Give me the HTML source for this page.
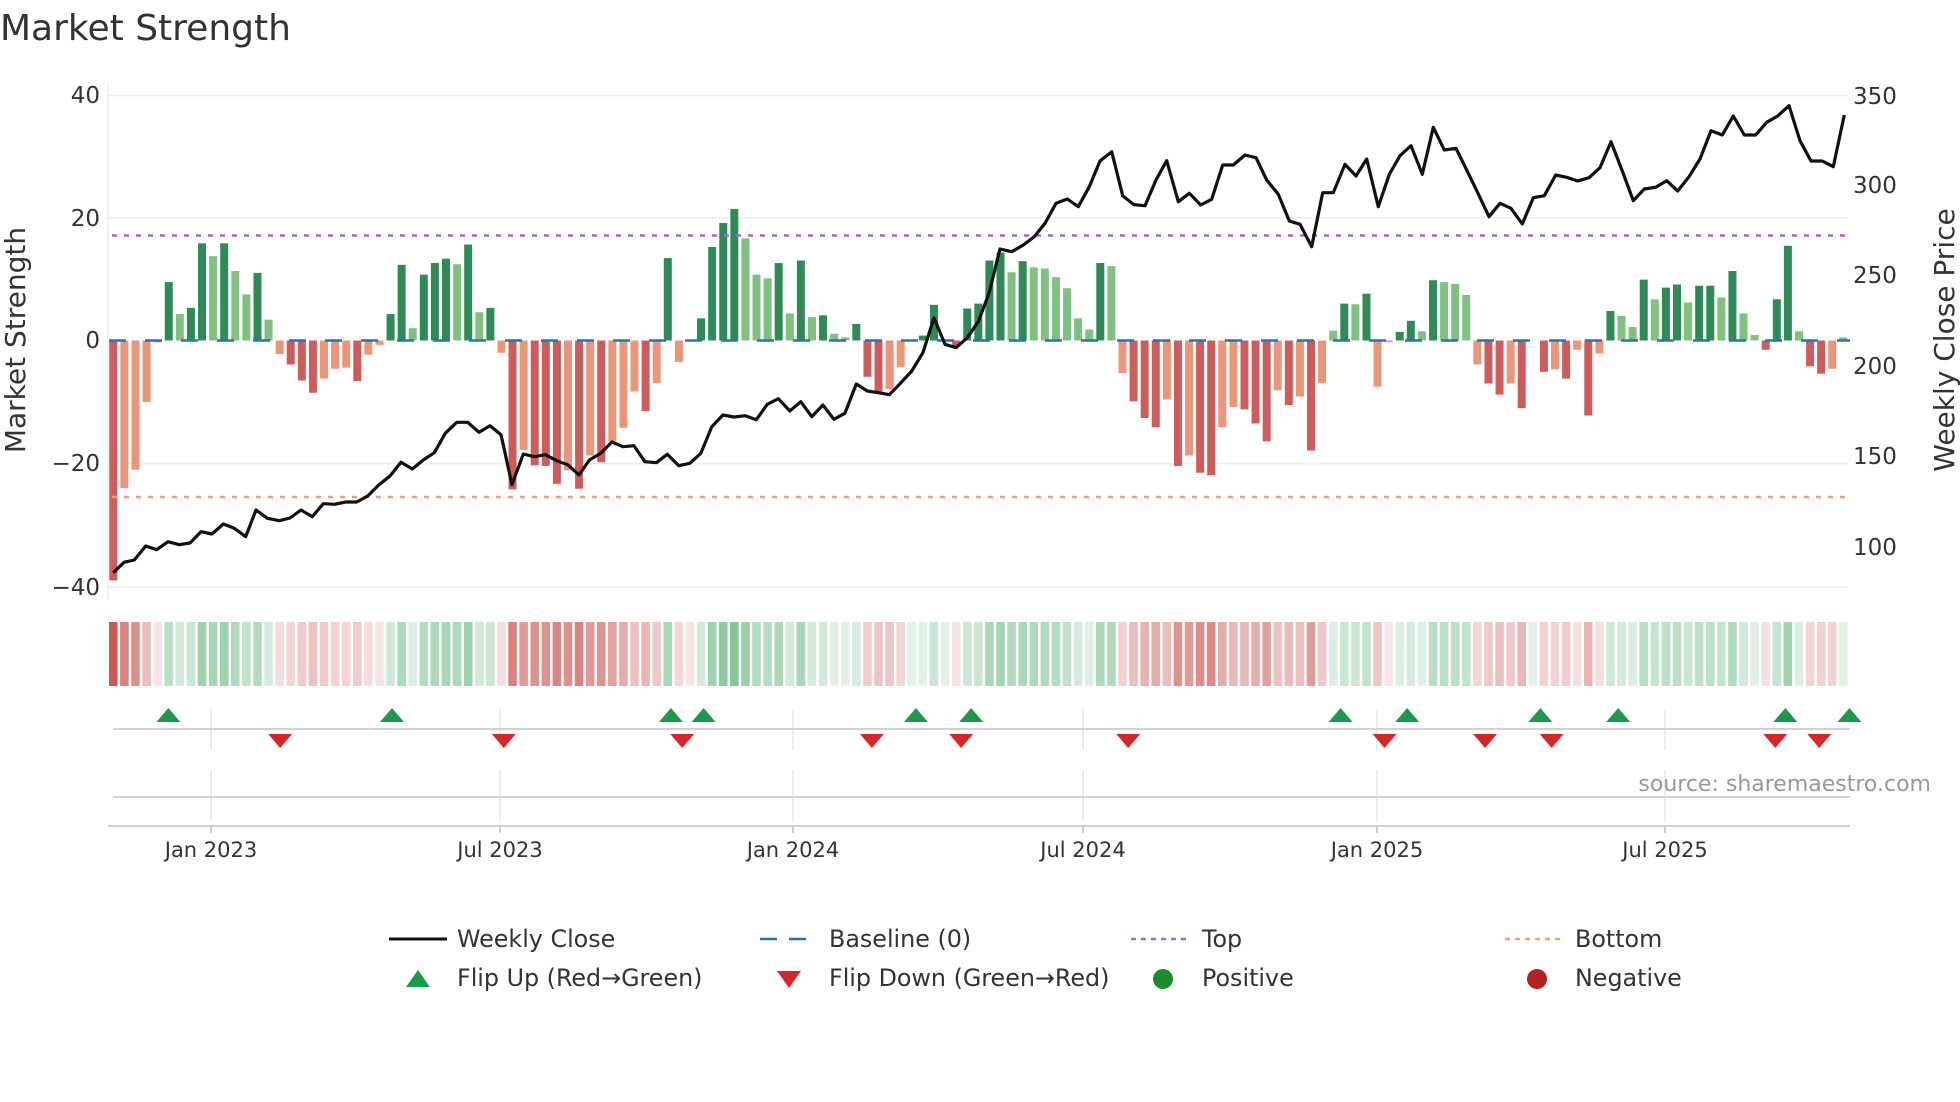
<!DOCTYPE html>
<html><head><meta charset="utf-8"><style>
html,body{margin:0;padding:0;background:#fff;}
svg{display:block;font-family:"DejaVu Sans","Liberation Sans",sans-serif;}
</style></head><body>
<svg id="s" width="1960" height="1102" viewBox="0 0 1960 1102" xmlns="http://www.w3.org/2000/svg">
<rect width="1960" height="1102" fill="#fff"/>
<text x="0" y="40" font-size="36" fill="#333">Market Strength</text>
<g stroke="#ececf2" stroke-width="1.5">
<line x1="108" y1="95.5" x2="1848" y2="95.5"/>
<line x1="108" y1="218" x2="1848" y2="218"/>
<line x1="108" y1="463.6" x2="1848" y2="463.6"/>
<line x1="108" y1="587" x2="1848" y2="587"/>
<line x1="108" y1="83" x2="108" y2="600"/>
</g>
<g font-size="23" fill="#333" text-anchor="end">
<text x="100" y="103">40</text><text x="100" y="226">20</text><text x="100" y="348">0</text>
<text x="100" y="471">−20</text><text x="100" y="595">−40</text>
</g>
<g font-size="23" fill="#333">
<text x="1853" y="104">350</text><text x="1853" y="193">300</text><text x="1853" y="283">250</text>
<text x="1853" y="374">200</text><text x="1853" y="464">150</text><text x="1853" y="555">100</text>
</g>
<text transform="translate(25,340) rotate(-90)" font-size="28" fill="#333" text-anchor="middle">Market Strength</text>
<text transform="translate(1954,340) rotate(-90)" font-size="28" fill="#333" text-anchor="middle">Weekly Close Price</text>
<g id="bars"></g>
<line x1="109" y1="340.5" x2="1850" y2="340.5" stroke="#1f77b4" stroke-width="2.5" stroke-dasharray="17 19"/>
<line x1="112" y1="235.5" x2="1850" y2="235.5" stroke="#a066dd" stroke-width="2.5" stroke-dasharray="5 7"/>
<line x1="112" y1="497" x2="1850" y2="497" stroke="#f0a070" stroke-width="2.5" stroke-dasharray="5 7"/>
<polyline id="price" fill="none" stroke="#111" stroke-width="3.2" stroke-linejoin="round"/>
<g id="strip"></g>
<g stroke="#e6e6ea" stroke-width="1.5" id="vgrid"></g>
<line x1="113" y1="729" x2="1850" y2="729" stroke="#d2d2d6" stroke-width="2"/>
<line x1="113" y1="797" x2="1850" y2="797" stroke="#d2d2d6" stroke-width="2"/>
<line x1="108" y1="826" x2="1850" y2="826" stroke="#cfcfd3" stroke-width="2"/>
<g id="marks"></g>
<g font-size="21" fill="#333" text-anchor="middle" id="ticks"></g>
<text x="1931" y="791" font-size="22" fill="#999" text-anchor="end">source: sharemaestro.com</text>
<g font-size="23.8" fill="#333">
<line x1="389" y1="939" x2="447" y2="939" stroke="#111" stroke-width="3"/>
<text x="457" y="947">Weekly Close</text>
<line x1="760" y1="939" x2="816" y2="939" stroke="#1f77b4" stroke-width="2.5" stroke-dasharray="17 12"/>
<text x="829" y="947">Baseline (0)</text>
<line x1="1131" y1="939" x2="1187" y2="939" stroke="#a066dd" stroke-width="2.5" stroke-dasharray="5 5"/>
<text x="1202" y="947">Top</text>
<line x1="1505" y1="939" x2="1562" y2="939" stroke="#f0a070" stroke-width="2.5" stroke-dasharray="5 5"/>
<text x="1575" y="947">Bottom</text>
<polygon points="406,987 430,987 418,970" fill="#1a9a4a"/>
<text x="457" y="986">Flip Up (Red→Green)</text>
<polygon points="777,971 801,971 789,988" fill="#d62728"/>
<text x="829" y="986">Flip Down (Green→Red)</text>
<circle cx="1163" cy="979" r="10" fill="#1e8c2e"/>
<text x="1202" y="986">Positive</text>
<circle cx="1537" cy="979" r="10" fill="#b22222"/>
<text x="1575" y="986">Negative</text>
</g>
</svg>
<script>
var NS="http://www.w3.org/2000/svg";
function el(t,a,p){var e=document.createElementNS(NS,t);for(var k in a)e.setAttribute(k,a[k]);document.getElementById(p).appendChild(e);return e;}
var V=[-39,-24,-21,-10,-0.3,9.5,4.3,5.3,15.8,13.7,15.8,11.3,7.5,11,3.4,-2.2,-3.9,-6.5,-8.5,-6.2,-4.6,-4.4,-6.6,-2.3,-0.7,4.3,12.3,2,10.7,12.6,13.3,12.4,15.6,4.6,5.3,
-2,-24.2,-17.8,-20.3,-20.4,-23.3,-21.1,-24.1,-18.7,-19.8,-16.4,-14.2,-8.3,-11.5,-6.9,13.4,-3.5,-0.2,3.6,15.2,19.1,21.4,16.6,10.7,10.1,12.6,4.4,13,3.8,4.1,1.1,0.5,2.7,
-5.9,-8.3,-7.9,-4.3,0,0.8,5.8,0,-1,5.2,6,13,14.3,11.1,12.9,11.9,11.7,10.3,8.5,3.6,1.8,12.6,12.1,
-5.3,-9.9,-12.6,-14.1,-9.6,-20.4,-18.7,-21.5,-21.9,-14.1,-10.8,-11.2,-13.5,-16.4,-8.1,-10.5,-9.1,-17.9,-6.9,
1.6,6,5.9,7.6,-7.5,-0.3,1.4,3.2,1.5,9.8,9.5,9.2,7.4,-3.9,-7,-8.8,-7,-11,0,-5.1,-4.7,-6.2,-1.5,-12.2,-2.1,
4.8,4.0,2.2,9.9,6.7,8.6,9.1,6.2,8.9,8.9,7,11.3,4.4,0.9,-1.5,6.7,15.4,1.5,-4.2,-5.4,-4.6,0.5];
var Z=340.5,K=6.15,X0=113.3,SP=11.09;
for(var i=0;i<V.length;i++){
 var v=V[i],x=X0+i*SP;
 var dark;
 if(i===0)dark=true;else dark=Math.abs(v)>=Math.abs(V[i-1])-0.05;
 var col=v>=0?(dark?"#2e8b57":"#80c080"):(dark?"#cd5c5c":"#e9967a");
 var h=Math.abs(v)*K; if(h<1.2&&v!==0)h=1.2;
 if(v!==0)el("rect",{x:x-4,y:v>=0?Z-h:Z,width:8,height:h,fill:col},"bars");
 var a=Math.min(0.92,0.14+0.78*Math.min(Math.abs(v)/34,1));
 var sc=v>=0?"rgba(60,165,90,"+a+")":"rgba(200,75,70,"+a+")";
 el("rect",{x:x-4.3,y:622,width:8.6,height:64,fill:sc},"strip");
}
var P=[];
function add(z,ox,oy,sx,sy){for(var i=0;i<z.length;i+=2)P.push((ox+z[i]/sx).toFixed(1)+","+(oy+z[i+1]/sy).toFixed(1));}
add([40,518,72,487,103,480,137,438,170,449,204,425,238,434,270,429,303,395,336,402,370,372,403,385,437,410,468,330,502,355,538,362,570,354,603,330,637,350,670,311,703,313,738,306,770,306,803,288,836,255,870,228,903,187,937,207,970,180,1003,158,1036,100,1070,67,1103,67,1137,97,1170,77,1203,104,1236,254,1270,162,1303,170,1336,164,1370,182,1403,194,1437,225],100,400,3,3);
add([268,480,296,460,323,426,350,440,377,437,404,485,432,488,459,463,487,497,514,490,541,460,568,380,595,345,622,351,650,347,677,359,704,313,731,296,759,333,786,305,813,350,840,315,867,358,894,340,922,252,949,273,976,278,1003,284,1030,250,1058,213,1085,158],480,300,2.45,3);
add([102,684,135,763,168,773,200,745,235,695,267,610,300,477,335,485,370,465,403,440,435,400,468,340,502,327,535,350,568,290,600,213,635,185,668,317,702,344,735,347,768,270,800,212,835,335,868,310,902,345,935,328,968,225,1000,225,1035,195,1068,203,1100,270,1135,313,1168,393,1200,403,1235,470,1268,308,1300,308,1335,223,1368,258,1400,207,1435,350],900,90,3,3);
add([58,253,90,197,123,167,157,253,190,112,223,180,258,175,290,240,323,308,357,380,390,340,423,355,457,402,490,323,523,317,557,255,590,262,623,273,657,263,690,233,723,155,757,243,790,332,823,297,857,292,890,272,923,303,957,260,990,207,1023,122,1057,135,1090,78,1123,135,1157,135,1190,97,1223,78,1257,47,1290,152,1323,213,1357,213,1390,230,1423,75],1370,90,3,3);
document.getElementById("price").setAttribute("points",P.join(" "));
var T=[["Jan 2023",211],["Jul 2023",500],["Jan 2024",793],["Jul 2024",1083],["Jan 2025",1377],["Jul 2025",1665]];
T.forEach(function(t){
 el("line",{x1:t[1],y1:709,x2:t[1],y2:750},"vgrid");
 el("line",{x1:t[1],y1:770,x2:t[1],y2:821},"vgrid");
 el("line",{x1:t[1],y1:826,x2:t[1],y2:833,stroke:"#bbb"},"vgrid");
 var e=el("text",{x:t[1],y:857},"ticks");e.textContent=t[0];
});
var up=[134,312,534,560,729,773,1067,1120,1226,1288,1421,1472],dn=[223,401,543,694,765,898,1102,1182,1235,1413,1448];
up.forEach(function(d){var x=d*1.2564;el("polygon",{points:(x-12)+",722 "+(x+12)+",722 "+x+",708",fill:"#1a9a4a"},"marks");});
dn.forEach(function(d){var x=d*1.2564;el("polygon",{points:(x-12)+",734 "+(x+12)+",734 "+x+",748",fill:"#d62728"},"marks");});
</script>
</body></html>
